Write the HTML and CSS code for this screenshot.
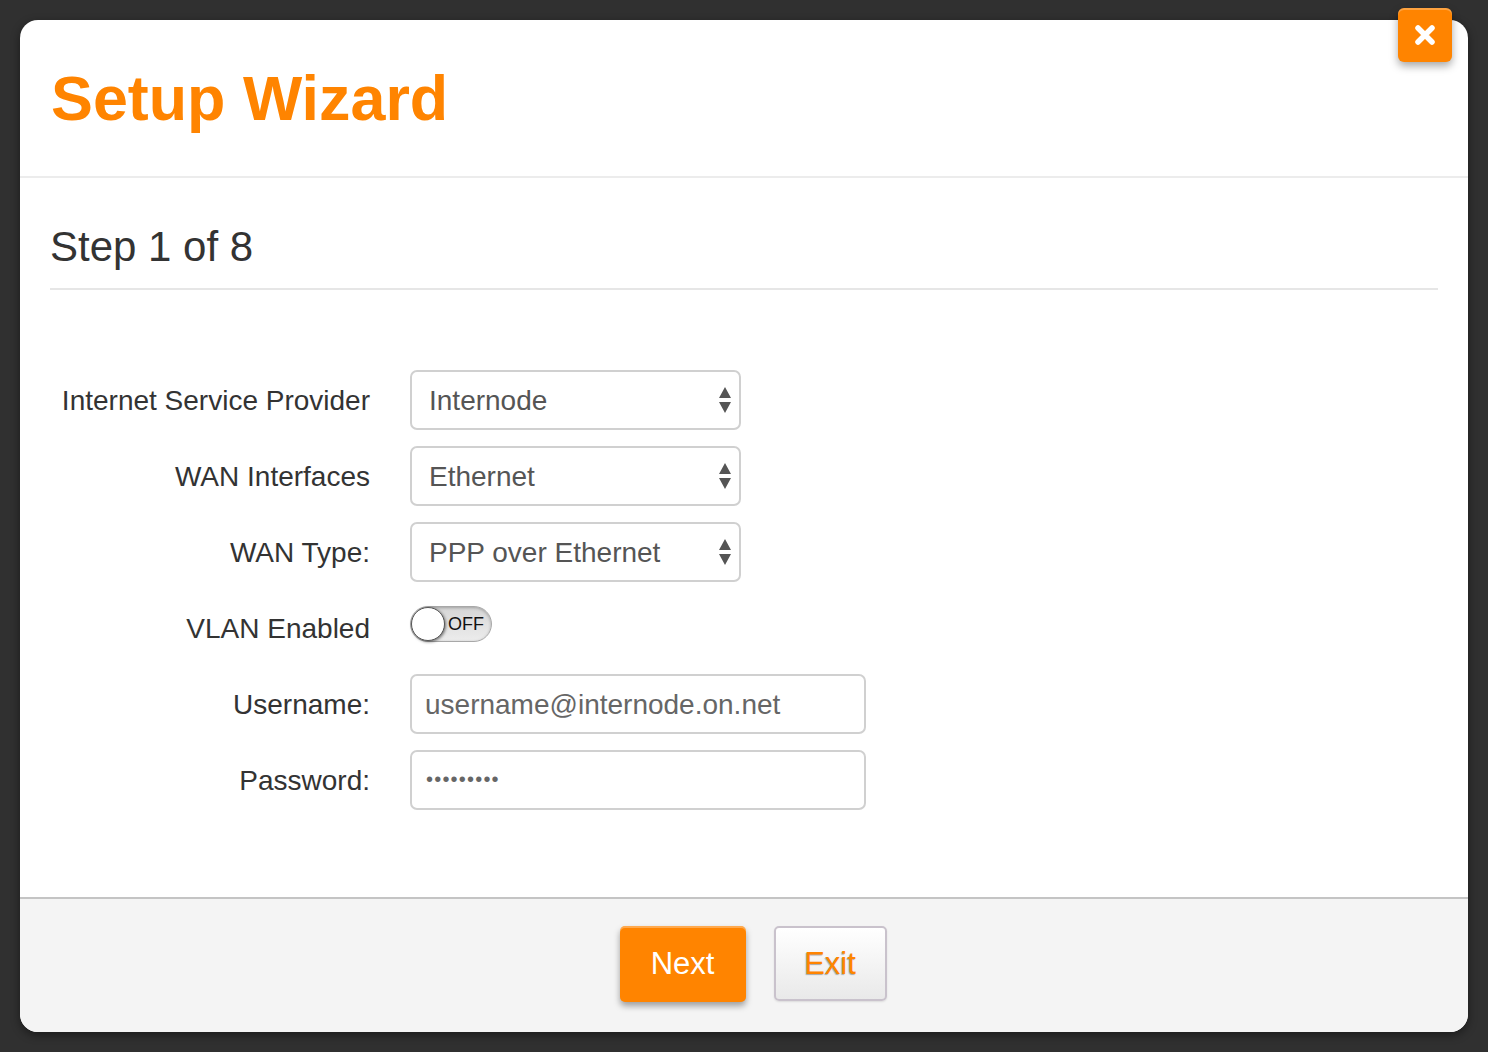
FILE: index.html
```html
<!DOCTYPE html>
<html lang="en">
<head>
<meta charset="utf-8">
<title>Setup Wizard</title>
<link rel="stylesheet" href="styles.css">
</head>
<body>
<div class="modal">
  <button class="close-btn" aria-label="Close">
    <svg width="22" height="22" viewBox="0 0 22 22"><path d="M4 4 L18 18 M18 4 L4 18" stroke="#fff" stroke-width="5.5" stroke-linecap="round"/></svg>
  </button>
  <header class="modal-header">
    <h1 class="title">Setup Wizard</h1>
  </header>
  <main class="modal-body">
    <h2 class="step">Step 1 of 8</h2>
    <form class="form">
      <label class="label">Internet Service Provider</label>
      <div class="select-wrap">
        <div class="select">Internode</div>
        <svg class="arrows" width="14" height="28" viewBox="0 0 14 28"><path d="M7 1 L13 12 L1 12 Z M1 16 L13 16 L7 27 Z" fill="#555"/></svg>
      </div>

      <label class="label">WAN Interfaces</label>
      <div class="select-wrap">
        <div class="select">Ethernet</div>
        <svg class="arrows" width="14" height="28" viewBox="0 0 14 28"><path d="M7 1 L13 12 L1 12 Z M1 16 L13 16 L7 27 Z" fill="#555"/></svg>
      </div>

      <label class="label">WAN Type:</label>
      <div class="select-wrap">
        <div class="select">PPP over Ethernet</div>
        <svg class="arrows" width="14" height="28" viewBox="0 0 14 28"><path d="M7 1 L13 12 L1 12 Z M1 16 L13 16 L7 27 Z" fill="#555"/></svg>
      </div>

      <label class="label">VLAN Enabled</label>
      <div class="toggle-cell">
        <div class="toggle">
          <span class="knob"></span>
          <span class="toggle-text">OFF</span>
        </div>
      </div>

      <label class="label">Username:</label>
      <div class="input">username@internode.on.net</div>

      <label class="label">Password:</label>
      <div class="input password">•••••••••</div>
    </form>
  </main>
  <footer class="modal-footer">
    <button class="btn btn-next">Next</button>
    <button class="btn btn-exit">Exit</button>
  </footer>
</div>
</body>
</html>
```

FILE: styles.css
```css
html, body {
  margin: 0;
  padding: 0;
}
body {
  background: #303030;
  font-family: "Liberation Sans", Arial, Helvetica, sans-serif;
  width: 1488px;
  height: 1052px;
  overflow: hidden;
}
.modal {
  position: relative;
  margin: 20px;
  width: 1448px;
  height: 1012px;
  background: #fff;
  border-radius: 18px;
  box-shadow: 0 3px 10px rgba(0,0,0,0.45);
  display: flex;
  flex-direction: column;
}
.close-btn {
  position: absolute;
  top: -12px;
  right: 16px;
  width: 54px;
  height: 54px;
  border: none;
  border-radius: 6px;
  background: #ff8400;
  box-shadow: 0 4px 8px rgba(0,0,0,0.35), inset 0 2px 0 rgba(255,255,255,0.25);
  display: flex;
  align-items: center;
  justify-content: center;
  padding: 0;
}
.modal-header {
  height: 156px;
  border-bottom: 2px solid #ececec;
  display: flex;
  align-items: center;
  padding-left: 31px;
  border-radius: 18px 18px 0 0;
}
.title {
  margin: 0;
  margin-top: 2px;
  font-size: 62.8px;
  font-weight: bold;
  color: #ff8400;
  line-height: 1.1;
}
.modal-body {
  flex: 1;
  padding: 46px 30px 0 30px;
}
.step {
  margin: 0;
  font-size: 42px;
  font-weight: normal;
  color: #333;
  line-height: 46px;
  padding-bottom: 18px;
  border-bottom: 2px solid #e6e6e6;
}
.form {
  margin-top: 80px;
  display: grid;
  grid-template-columns: 320px 456px;
  column-gap: 40px;
  row-gap: 16px;
  grid-auto-rows: 60px;
}
.label {
  font-size: 28px;
  color: #333;
  text-align: right;
  align-self: center;
  padding-top: 1px;
}
.select-wrap {
  position: relative;
  width: 331px;
  height: 60px;
}
.select {
  box-sizing: border-box;
  width: 331px;
  height: 60px;
  border: 2px solid #d0d0d0;
  border-radius: 7px;
  padding-left: 17px;
  font-size: 28px;
  color: #555;
  line-height: 58px;
  background: #fff;
}
.arrows {
  position: absolute;
  right: 9px;
  top: 16px;
}
.toggle-cell {
  display: flex;
  align-items: flex-start;
  padding-top: 8px;
}
.toggle {
  position: relative;
  box-sizing: border-box;
  width: 82px;
  height: 36px;
  border-radius: 18px;
  border: 1px solid #a8a8a8;
  background: linear-gradient(#d6d6d6, #ececec);
  box-shadow: inset 0 1px 3px rgba(0,0,0,0.25);
  display: flex;
  align-items: center;
}
.knob {
  position: absolute;
  left: 0;
  top: 0;
  width: 32px;
  height: 32px;
  border-radius: 50%;
  background: #fff;
  border: 1px solid #555;
  box-shadow: 1px 1px 3px rgba(0,0,0,0.5);
}
.toggle-text {
  margin-left: 37px;
  font-size: 18px;
  color: #111;
}
.input {
  box-sizing: border-box;
  width: 456px;
  height: 60px;
  border: 2px solid #d0d0d0;
  border-radius: 7px;
  padding-left: 13px;
  font-size: 28px;
  color: #666;
  line-height: 58px;
  background: #fff;
}
.password {
  font-size: 20px;
  letter-spacing: 1.2px;
  padding-left: 14px;
  color: #666;
  line-height: 54px;
}
.modal-footer {
  height: 135px;
  border-top: 2px solid #c4c4c4;
  background: #f4f4f4;
  border-radius: 0 0 18px 18px;
  display: flex;
  justify-content: center;
  align-items: flex-start;
  gap: 28px;
  padding-top: 27px;
  padding-left: 18px;
  box-sizing: border-box;
}
.btn {
  font-family: "Liberation Sans", Arial, Helvetica, sans-serif;
  font-size: 31px;
  border-radius: 5px;
  padding: 0;
  cursor: pointer;
}
.btn-next {
  width: 126px;
  height: 76px;
  background: #ff8400;
  color: #fff;
  border: none;
  box-shadow: 0 4px 6px rgba(0,0,0,0.35), inset 0 2px 0 rgba(255,255,255,0.3);
}
.btn-exit {
  width: 113px;
  height: 75px;
  background: linear-gradient(#ffffff, #e9e9e9);
  color: #ff8400;
  border: 2px solid #c9c2cc;
  text-shadow: -1px 1px 1px rgba(120,120,120,0.6);
  box-shadow: 0 1px 2px rgba(0,0,0,0.1);
}
```
